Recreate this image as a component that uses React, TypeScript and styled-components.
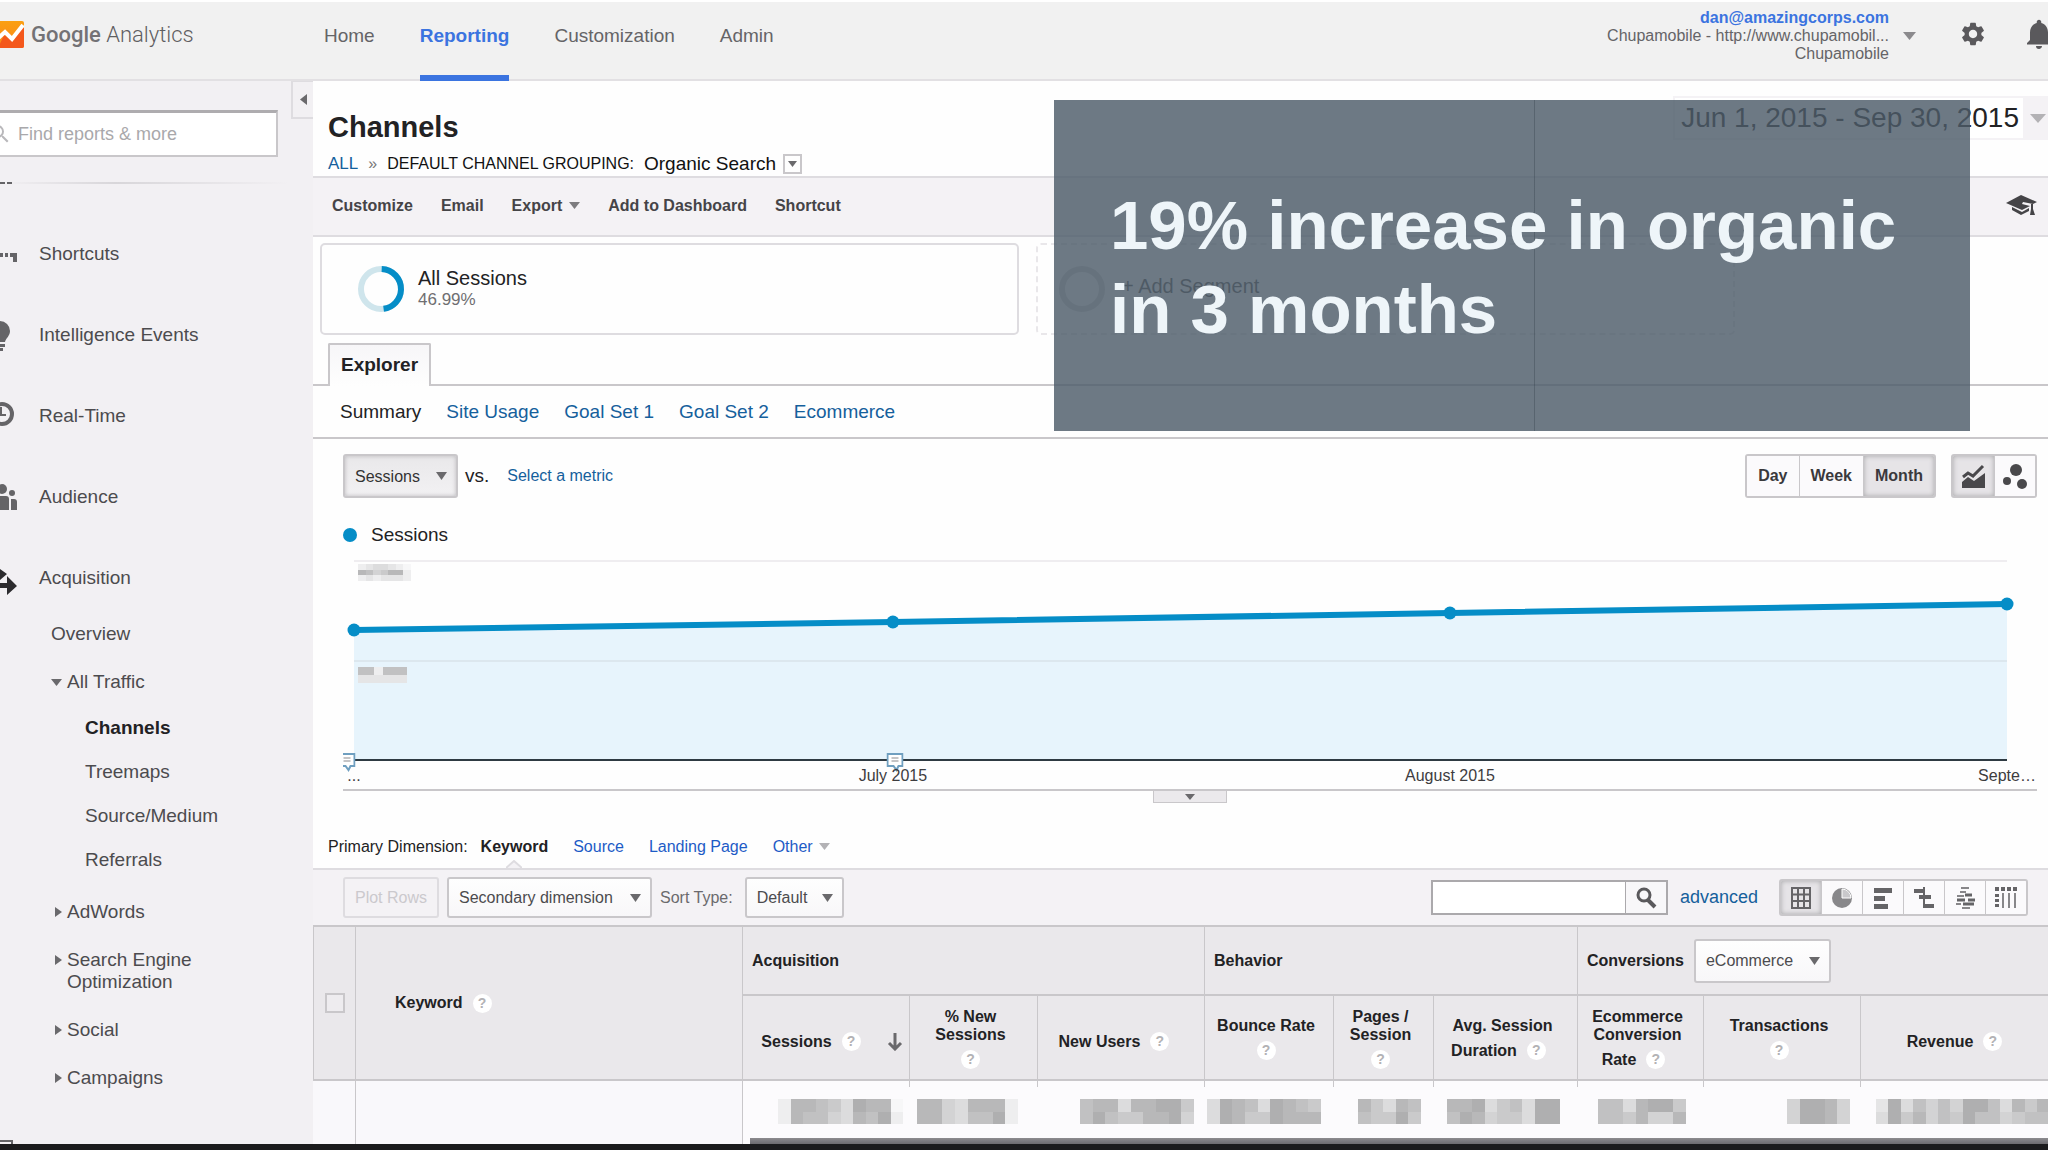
import React from "react";
import styled, { createGlobalStyle, css } from "styled-components";
import { MdNotifications, MdSearch, MdSettings } from "react-icons/md";

const color = {
  panel: "#f2f0f3",
  bar: "#f4f2f5",
  head: "#eae8eb",
  line: "#c9c7ca",
  softLine: "#dedce0",
  text: "#222224",
  muted: "#4c4b4e",
  link: "#15609c",
  blue: "#3b74e0",
  series: "#058dc7",
};

const GlobalStyle = createGlobalStyle`
  *, *::before, *::after { box-sizing: border-box; }
  body { margin: 0; background: #fff; }
  body, button, input, select { font-family: "Liberation Sans", Arial, sans-serif; font-size: 16px; color: ${color.text}; }
  button { padding: 0; border: 0; background: none; cursor: pointer; }
  a { text-decoration: none; color: ${color.link}; }
  ul { list-style: none; margin: 0; padding: 0; }
  h1, h2, p { margin: 0; }
  svg { display: block; flex: none; }
`;

/* ---------- shared ---------- */

const Page = styled.div`
  display: flex;
  flex-direction: column;
  min-height: 100vh;
  position: relative;
  overflow: hidden;
`;

const Columns = styled.div`
  display: flex;
  flex: 1;
`;

const Main = styled.main`
  flex: 1;
  min-width: 0;
  background: #fefefe;
`;

const PageEdge = styled.footer`
  height: 8px;
  background: #1b1b1d;
  border-bottom: 2px solid #fff;
`;

type CaretProps = { dir?: "down" | "left" | "right"; w?: number; h?: number; fill?: string };

function Caret({ dir = "down", w = 11, h = 8, fill = "#6a696c" }: CaretProps) {
  const points = {
    down: `0,0 ${w},0 ${w / 2},${h}`,
    left: `${w},0 ${w},${h} 0,${h / 2}`,
    right: `0,0 0,${h} ${w},${h / 2}`,
  }[dir];
  return (
    <svg width={w} height={h} aria-hidden="true">
      <polygon points={points} fill={fill} />
    </svg>
  );
}

const PickerBox = styled.span<{ $w: number; $h: number }>`
  display: inline-grid;
  align-items: center;
  width: ${(p) => p.$w}px;
  height: ${(p) => p.$h}px;
  > * { grid-area: 1 / 1; }
  > svg { justify-self: end; margin-right: 11px; pointer-events: none; }
`;

const PickerSelect = styled.select<{ $pressed?: boolean }>`
  appearance: none;
  width: 100%;
  height: 100%;
  padding: 0 24px 0 10px;
  border: 2px solid ${color.line};
  border-radius: 3px;
  color: ${color.muted};
  background: linear-gradient(#fefefe, #f8f7f9);
  ${(p) =>
    p.$pressed &&
    css`
      background: linear-gradient(#e9e8ea, #f2f1f3);
      box-shadow: inset 0 0 4px #bbb9bc;
      color: #333;
    `}
`;

function Picker(props: { label: string; value: string; w: number; h: number; pressed?: boolean }) {
  return (
    <PickerBox $w={props.w} $h={props.h}>
      <PickerSelect aria-label={props.label} $pressed={props.pressed}>
        <option>{props.value}</option>
      </PickerSelect>
      <Caret />
    </PickerBox>
  );
}

/* ---------- header ---------- */

const Header = styled.header`
  display: flex;
  height: 81px;
  border-top: 2px solid #fff;
  border-bottom: 2px solid #e2e0e3;
  background: #f1f1f1;
`;

const Brand = styled.a`
  display: flex;
  align-items: center;
  gap: 7px;
  width: 328px;
  height: 64px;
  margin-left: -4px;
  font-family: Roboto, sans-serif;
  font-size: 22px;
  font-weight: 300;
  color: #5f5e61;
  b { font-weight: 500; color: #737275; }
`;

const TopNav = styled.nav`
  display: flex;
  gap: 45px;
`;

const TopLink = styled.a<{ $active?: boolean }>`
  display: flex;
  height: 79px;
  margin-bottom: -2px;
  padding-top: 22px;
  line-height: 24px;
  font-size: 19px;
  color: #656467;
  border-bottom: 6px solid transparent;
  ${(p) => p.$active && css`color: ${color.blue}; font-weight: bold; border-color: ${color.blue};`}
`;

const HeaderTools = styled.div`
  display: flex;
  align-items: center;
  height: 64px;
  margin: 0 -9px 0 auto;
`;

const Account = styled.button`
  display: flex;
  align-items: center;
  gap: 14px;
  margin: 4px 43px 0 0;
  text-align: right;
  line-height: 18px;
  color: #656467;
  span { display: block; }
  b { color: ${color.blue}; }
`;

const IconButton = styled.button`
  display: flex;
  color: #5a595c;
  & + & { margin-left: 34px; }
`;

function LogoMark() {
  return (
    <svg width="28" height="27" viewBox="0 0 28 27" aria-hidden="true">
      <defs>
        <linearGradient id="mark" x1="0" y1="0" x2="0" y2="1">
          <stop offset="0" stopColor="#fba012" />
          <stop offset="1" stopColor="#f9861a" />
        </linearGradient>
      </defs>
      <rect width="28" height="27" rx="2" fill="url(#mark)" />
      <path d="M28 7 L28 25 Q28 27 26 27 L2 27 L8 14 L17 20 L26 7Z" fill="#f4581c" />
      <path d="M-1 20 L9 11 L16 18 L27 4" fill="none" stroke="#fff" strokeWidth="4" />
    </svg>
  );
}

function TopBar() {
  return (
    <Header>
      <Brand href="#home" aria-label="Google Analytics">
        <LogoMark />
        <span><b>Google</b> Analytics</span>
      </Brand>
      <TopNav>
        <TopLink href="#home">Home</TopLink>
        <TopLink href="#reporting" $active>Reporting</TopLink>
        <TopLink href="#customization">Customization</TopLink>
        <TopLink href="#admin">Admin</TopLink>
      </TopNav>
      <HeaderTools>
        <Account>
          <span>
            <b>dan@amazingcorps.com</b>
            <span>Chupamobile - http://www.chupamobil...</span>
            <span>Chupamobile</span>
          </span>
          <Caret w={13} h={8} fill="#8b8a8d" />
        </Account>
        <IconButton aria-label="Settings"><MdSettings size={28} /></IconButton>
        <IconButton aria-label="Notifications"><MdNotifications size={36} /></IconButton>
      </HeaderTools>
    </Header>
  );
}

/* ---------- sidebar ---------- */

const Sidebar = styled.aside`
  display: flex;
  flex-direction: column;
  width: 313px;
  flex: none;
  background: ${color.panel};
`;

const SidebarTop = styled.div`
  display: flex;
  justify-content: space-between;
  align-items: flex-start;
`;

const ReportSearch = styled.label`
  display: flex;
  align-items: center;
  gap: 6px;
  width: 278px;
  height: 47px;
  margin-top: 29px;
  border: 2px solid ${color.line};
  border-top: 3px solid #aeacaf;
  border-left: 0;
  background: #fff;
  color: #b9b8bb;
  overflow: hidden;
  svg { margin-left: -12px; }
  input {
    flex: 1;
    min-width: 0;
    padding: 0;
    border: 0;
    outline: 0;
    font-size: 18px;
    background: none;
  }
  input::placeholder { color: #a9a8ab; opacity: 1; }
`;

const CollapseTab = styled.button`
  display: flex;
  align-items: center;
  justify-content: center;
  width: 22px;
  height: 38px;
  border: 2px solid ${color.softLine};
  border-top-width: 1px;
  border-right: 0;
`;

const Divider = styled.div`
  display: flex;
  height: 12px;
  margin: 25px 24px 0 0;
  background: linear-gradient(90deg, transparent, rgba(190, 188, 192, 0.5) 40%, transparent) top / 100% 2px no-repeat;
`;

const Sections = styled.ul`
  display: flex;
  flex-direction: column;
  gap: 47px;
  padding-top: 43px;
`;

const SectionLink = styled.a`
  display: flex;
  align-items: center;
  gap: 22px;
  height: 34px;
  margin-left: -17px;
  font-size: 19px;
  color: ${color.muted};
`;

const SubList = styled.ul`
  padding-top: 15px;
`;

const SubLink = styled.a<{ $closed?: boolean }>`
  display: flex;
  gap: 5px;
  padding: 13px 88px 13px ${(p) => (p.$closed ? 55 : 51)}px;
  line-height: 22px;
  font-size: 19px;
  color: ${color.muted};
  svg { margin-top: ${(p) => (p.$closed ? 6 : 8)}px; }
`;

const LeafList = styled.ul`
  padding-bottom: 6px;
`;

const LeafLink = styled.a<{ $active?: boolean }>`
  display: block;
  padding-left: 85px;
  line-height: 44px;
  font-size: 19px;
  color: ${(p) => (p.$active ? color.text : color.muted)};
  font-weight: ${(p) => (p.$active ? "bold" : "normal")};
`;

const NextSection = styled.div`
  margin-top: auto;
`;

const sectionIcons: Record<string, React.ReactNode> = {
  Shortcuts: (
    <g fill="#656467">
      <rect x="2" y="16" width="4" height="4" /><rect x="8" y="16" width="3" height="4" />
      <rect x="12" y="16" width="3" height="4" /><rect x="17" y="16" width="3" height="4" />
      <rect x="22" y="16" width="3" height="4" />
      <path d="M27 16h7v9h-4v-5h-3z" />
    </g>
  ),
  "Intelligence Events": (
    <g fill="#656467">
      <path d="M17 3a10 10 0 0 1 10 10c0 5-4 7-5 11H12c-1-4-5-6-5-11A10 10 0 0 1 17 3z" />
      <rect x="13" y="26" width="9" height="3" /><rect x="14" y="30" width="6" height="3" />
    </g>
  ),
  "Real-Time": (
    <g fill="none" stroke="#656467">
      <circle cx="19" cy="15" r="10" strokeWidth="4" />
      <path d="M18 8v8h5" strokeWidth="2" />
    </g>
  ),
  Audience: (
    <g fill="#656467">
      <circle cx="19" cy="9" r="5" /><circle cx="29" cy="13" r="3" />
      <path d="M12 30V19q0-3 3-3h8q3 0 3 3v11zM28 30V19h3q3 0 3 3v8z" />
    </g>
  ),
  Acquisition: (
    <g fill="#2c2b2e">
      <path d="M13 5l11 8-7 6H6zM4 22h20v-7l10 10-10 9v-7H4z" />
    </g>
  ),
};

const channels = ["Channels", "Treemaps", "Source/Medium", "Referrals"];

function SideNav() {
  return (
    <Sidebar>
      <SidebarTop>
        <ReportSearch>
          <MdSearch size={24} />
          <input type="search" placeholder="Find reports & more" aria-label="Find reports & more" />
        </ReportSearch>
        <CollapseTab aria-label="Collapse navigation"><Caret dir="left" w={7} h={11} /></CollapseTab>
      </SidebarTop>
      <Divider>
        <svg width="12" height="2" aria-hidden="true"><path d="M0 1h5M7 1h5" stroke="#656467" strokeWidth="2" /></svg>
      </Divider>
      <nav>
        <Sections>
          {Object.entries(sectionIcons).map(([name, icon]) => (
            <li key={name}>
              <SectionLink href="#section">
                <svg width="34" height="34" aria-hidden="true">{icon}</svg>
                {name}
              </SectionLink>
            </li>
          ))}
        </Sections>
        <SubList>
          <li><SubLink href="#overview">Overview</SubLink></li>
          <li>
            <SubLink href="#traffic"><Caret w={11} h={7} />All Traffic</SubLink>
            <LeafList>
              {channels.map((name, i) => (
                <li key={name}><LeafLink href="#report" $active={i === 0}>{name}</LeafLink></li>
              ))}
            </LeafList>
          </li>
          {["AdWords", "Search Engine Optimization", "Social", "Campaigns"].map((name) => (
            <li key={name}>
              <SubLink href="#group" $closed><Caret dir="right" w={7} h={10} /><span>{name}</span></SubLink>
            </li>
          ))}
        </SubList>
      </nav>
      <NextSection>
        <svg width="14" height="4" aria-hidden="true"><path d="M0 1h12v4" fill="none" stroke="#656467" strokeWidth="2" /></svg>
      </NextSection>
    </Sidebar>
  );
}

/* ---------- report heading ---------- */

const Heading = styled.div`
  display: flex;
  justify-content: space-between;
  align-items: flex-start;
  height: 95px;
  padding-left: 15px;
`;

const Title = styled.h1`
  margin-top: 29px;
  line-height: 34px;
  font-size: 29px;
`;

const Crumbs = styled.div`
  display: flex;
  align-items: center;
  gap: 10px;
  height: 24px;
  margin-top: 8px;
  color: #111;
  a { font-size: 17px; }
  i { font-style: normal; color: #777; }
  b { font-weight: normal; font-size: 19px; }
  button {
    display: grid;
    place-items: center;
    width: 19px;
    height: 20px;
    margin-left: -3px;
    border: 2px solid ${color.line};
  }
`;

const DateRange = styled.button`
  display: flex;
  align-items: stretch;
  height: 44px;
  margin: 15px -6px 0 0;
  border: 2px solid #f4f2f5;
  background: ${color.bar};
  font-size: 28px;
  line-height: 40px;
  span { background: #fff; padding: 0 4px 0 6px; }
  svg { margin: 16px 6px 0 7px; }
`;

const ActionBar = styled.div`
  display: flex;
  align-items: center;
  gap: 28px;
  height: 61px;
  padding: 0 11px 2px 19px;
  border: solid ${color.softLine};
  border-width: 2px 0;
  background: ${color.bar};
  button { display: flex; align-items: center; gap: 7px; font-weight: bold; color: #454447; }
  button:last-child { margin-left: auto; }
`;

const SegmentRow = styled.div`
  display: flex;
  gap: 17px;
  padding: 6px 8px 8px 7px;
`;

const Segment = styled.button<{ $dashed?: boolean }>`
  display: flex;
  flex: 0 1 699px;
  align-items: center;
  gap: ${(p) => (p.$dashed ? 16 : 13)}px;
  height: 92px;
  padding-left: ${(p) => (p.$dashed ? 20 : 35)}px;
  border: 2px ${(p) => (p.$dashed ? "dashed #e9e7ea" : `solid ${color.softLine}`)};
  border-radius: 5px;
  text-align: left;
  font-size: 20px;
  line-height: 24px;
  color: ${(p) => (p.$dashed ? "#555" : color.text)};
  > span { padding-bottom: ${(p) => (p.$dashed ? 6 : 2)}px; }
  small { display: block; font-size: 17px; line-height: 20px; color: #6f6e71; }
`;

const TabRow = styled.div`
  display: flex;
  height: 43px;
  padding-left: 15px;
  border-bottom: 2px solid ${color.line};
`;

const ExplorerTab = styled.button`
  height: 43px;
  padding: 0 11px 2px;
  border: 2px solid ${color.line};
  border-bottom: 0;
  border-radius: 2px 2px 0 0;
  background: linear-gradient(#f7f6f8, #fefefe);
  font-size: 19px;
  font-weight: bold;
`;

const ReportTabs = styled.nav`
  display: flex;
  gap: 25px;
  height: 53px;
  padding-left: 27px;
  line-height: 52px;
  font-size: 19px;
  border-bottom: 2px solid ${color.line};
  a[aria-current] { color: ${color.text}; }
`;

function Donut({ share }: { share?: number }) {
  const r = 20;
  const c = 2 * Math.PI * r;
  return (
    <svg width="48" height="48" viewBox="0 0 48 48" aria-hidden="true">
      <circle cx="24" cy="24" r={r} fill="none" stroke={share ? "#cfe5ec" : "#d8d8d8"} strokeWidth="6" />
      {share && (
        <circle
          cx="24" cy="24" r={r} fill="none" stroke={color.series} strokeWidth="6"
          strokeDasharray={`${c * share} ${c}`} transform="rotate(-88 24 24)"
        />
      )}
    </svg>
  );
}

function CapIcon() {
  return (
    <svg width="31" height="21" viewBox="0 0 31 21" fill="#454447" aria-hidden="true">
      <path d="M0 8L15 0l16 7-4 2-10-2-1 2 8 2-8 4z" />
      <path d="M6 12l10 5 7-4v3l-8 4-9-5zM25 9h2v5l2 6h-5l1-6z" />
    </svg>
  );
}

function ReportHead() {
  return (
    <>
      <Heading>
        <div>
          <Title>Channels</Title>
          <Crumbs>
            <a href="#all">ALL</a><i>»</i>
            <span>DEFAULT CHANNEL GROUPING:</span><b>Organic Search</b>
            <button aria-label="Change channel"><Caret w={9} h={6} /></button>
          </Crumbs>
        </div>
        <DateRange>
          <span>Jun 1, 2015 - Sep 30, 2015</span>
          <Caret w={16} h={9} fill="#b3b2b5" />
        </DateRange>
      </Heading>
      <ActionBar>
        <button>Customize</button>
        <button>Email</button>
        <button>Export <Caret fill="#7d7c7f" h={7} /></button>
        <button>Add to Dashboard</button>
        <button>Shortcut</button>
        <button aria-label="Education"><CapIcon /></button>
      </ActionBar>
      <SegmentRow>
        <Segment>
          <Donut share={0.47} />
          <span>All Sessions<small>46.99%</small></span>
        </Segment>
        <Segment $dashed><Donut /><span>+ Add Segment</span></Segment>
      </SegmentRow>
      <TabRow><ExplorerTab>Explorer</ExplorerTab></TabRow>
      <ReportTabs>
        <a href="#summary" aria-current="page">Summary</a>
        <a href="#usage">Site Usage</a>
        <a href="#goal1">Goal Set 1</a>
        <a href="#goal2">Goal Set 2</a>
        <a href="#ecommerce">Ecommerce</a>
      </ReportTabs>
    </>
  );
}

/* ---------- chart ---------- */

const ChartBlock = styled.section`
  padding: 15px 11px 0 30px;
`;

const ChartControls = styled.div`
  display: flex;
  align-items: center;
  gap: 7px;
  height: 44px;
  > span + span { font-size: 19px; }
  > a { margin-left: 11px; }
`;

const ButtonGroup = styled.div<{ $h: number; $push?: boolean }>`
  display: flex;
  height: ${(p) => p.$h}px;
  margin-left: ${(p) => (p.$push ? "auto" : "8px")};
  border: 2px solid ${color.line};
  border-radius: 3px;
  overflow: hidden;
`;

const GroupButton = styled.button<{ $pressed?: boolean; $pad?: number }>`
  display: flex;
  align-items: center;
  justify-content: center;
  padding: 0 ${(p) => p.$pad ?? 11}px;
  font-weight: bold;
  color: #3a393c;
  background: ${(p) => (p.$pressed ? "#e6e4e7" : "#fbfafc")};
  box-shadow: ${(p) => (p.$pressed ? "inset 0 0 5px #a9a8ab" : "none")};
  & + & { border-left: 1px solid ${color.line}; }
`;

const Legend = styled.div`
  display: flex;
  align-items: center;
  gap: 14px;
  margin-top: 25px;
  line-height: 24px;
  font-size: 19px;
`;

const Plot = styled.div`
  position: relative;
  height: 231px;
  margin-top: 13px;
  overflow: hidden;
  border-bottom: 2px solid ${color.line};
`;

const PlotArea = styled.div`
  position: relative;
  margin: 0 30px 0 11px;
  > svg { width: 100%; height: 202px; overflow: visible; }
`;

const Tick = styled.span`
  position: absolute;
  top: 206px;
  line-height: 20px;
  transform: translateX(-50%);
  white-space: nowrap;
  color: #3d3c3f;
`;

const Note = styled.span`
  position: absolute;
  top: 193px;
  transform: translateX(-50%);
`;

const Redacted = styled.span<{ $top: number }>`
  position: absolute;
  top: ${(p) => p.$top}px;
  left: 4px;
`;

const ChartHandle = styled.button`
  display: flex;
  align-items: center;
  justify-content: center;
  width: 74px;
  height: 12px;
  margin: 0 auto;
  border: 1px solid ${color.line};
  border-top: 0;
  background: #ebe9ec;
`;

const points = [
  { x: 0, y: 70, label: "..." },
  { x: 32.6, y: 62, label: "July 2015" },
  { x: 66.3, y: 53, label: "August 2015" },
  { x: 100, y: 44, label: "Septe…" },
];

const notes = [-0.4, 32.7];

function Mosaic({ rows, w, h }: { rows: string[]; w: number; h: number }) {
  const cols = rows[0].length;
  return (
    <svg width={w} height={h} viewBox={`0 0 ${cols} ${rows.length}`} preserveAspectRatio="none" shapeRendering="crispEdges" aria-hidden="true">
      {rows.flatMap((row, y) =>
        [...row].map((d, x) => {
          const g = 247 - Number(d) * 9;
          return <rect key={`${x}-${y}`} x={x} y={y} width="1" height="1" fill={`rgb(${g},${g},${g + 1})`} />;
        }),
      )}
    </svg>
  );
}

function NoteIcon() {
  return (
    <svg width="17" height="19" viewBox="0 0 17 19" aria-hidden="true">
      <path d="M1 1h15v12h-4l-2 4-3-4H1z" fill="#fff" stroke="#6f9fc0" strokeWidth="2" />
      <path d="M5 5h7M5 8h7" stroke="#8a898c" />
    </svg>
  );
}

function SessionsChart() {
  const line = points.map((p) => `${p.x * 10},${p.y}`).join(" ");
  return (
    <ChartBlock>
      <ChartControls>
        <Picker label="Metric" value="Sessions" w={115} h={44} pressed />
        <span>vs.</span>
        <a href="#metric">Select a metric</a>
        <ButtonGroup $h={44} $push>
          <GroupButton>Day</GroupButton>
          <GroupButton>Week</GroupButton>
          <GroupButton $pressed>Month</GroupButton>
        </ButtonGroup>
        <ButtonGroup $h={44}>
          <GroupButton $pressed $pad={9} aria-label="Line chart">
            <svg width="23" height="24" aria-hidden="true">
              <path d="M0 24V18l6-5 6 4 11-8v15z" fill="#49484b" />
              <path d="M1 13l5-4 5 3L21 2" fill="none" stroke="#49484b" strokeWidth="3" />
            </svg>
          </GroupButton>
          <GroupButton $pad={8} aria-label="Motion chart">
            <svg width="24" height="26" fill="#49484b" aria-hidden="true">
              <circle cx="13" cy="7" r="6" /><circle cx="4" cy="18" r="4" /><circle cx="19" cy="21" r="5" />
            </svg>
          </GroupButton>
        </ButtonGroup>
      </ChartControls>
      <Legend>
        <svg width="14" height="14" aria-hidden="true"><circle cx="7" cy="7" r="7" fill={color.series} /></svg>
        Sessions
      </Legend>
      <Plot>
        <PlotArea>
          <svg viewBox="0 0 1000 202" preserveAspectRatio="none" role="img" aria-label="Sessions by month">
            <polygon points={`0,200 ${line} 1000,200`} fill="#e7f4fc" />
            <path d="M0 1H1000" stroke="#efedf0" strokeWidth="2" vectorEffect="non-scaling-stroke" />
            <path d="M0 101H1000" stroke="#dce7ee" strokeWidth="2" vectorEffect="non-scaling-stroke" />
            <polyline points={line} fill="none" stroke={color.series} strokeWidth="6" vectorEffect="non-scaling-stroke" />
            {points.map((p) => (
              <path
                key={p.x} d={`M${p.x * 10} ${p.y}h0.01`} stroke={color.series} strokeWidth="13"
                strokeLinecap="round" vectorEffect="non-scaling-stroke"
              />
            ))}
            <path d="M0 200H1000" stroke="#2e3a42" strokeWidth="2" vectorEffect="non-scaling-stroke" />
          </svg>
          <Redacted $top={4}><Mosaic rows={["1233210", "7645771", "1212221"]} w={53} h={17} /></Redacted>
          <Redacted $top={107}><Mosaic rows={["661666", "222222"]} w={49} h={16} /></Redacted>
          {notes.map((x) => (
            <Note key={x} style={{ left: `${x}%` }}><NoteIcon /></Note>
          ))}
          {points.map((p) => (
            <Tick key={p.label} style={{ left: `${p.x}%` }}>{p.label}</Tick>
          ))}
        </PlotArea>
      </Plot>
      <ChartHandle aria-label="Expand chart"><Caret w={10} h={6} /></ChartHandle>
    </ChartBlock>
  );
}

/* ---------- table ---------- */

const Dimensions = styled.div`
  display: flex;
  gap: 25px;
  height: 67px;
  padding: 22px 0 0 15px;
  line-height: 44px;
  border-bottom: 2px solid ${color.softLine};
  span { margin-right: -12px; }
  a { color: #1d5bc6; }
  a:last-child { display: flex; align-items: center; gap: 6px; }
`;

const Current = styled.b`
  position: relative;
  svg { position: absolute; bottom: -1px; left: 50%; margin-left: -8px; }
`;

const TableBar = styled.div`
  display: flex;
  align-items: center;
  gap: 8px;
  height: 55px;
  padding: 0 20px 0 30px;
  background: ${color.bar};
  label { display: flex; align-items: center; gap: 12px; color: #6b6a6d; }
  > a { margin: 0 5px 0 4px; font-size: 18px; }
`;

const PlotRows = styled.button`
  width: 96px;
  height: 41px;
  border: 2px solid ${color.softLine};
  border-radius: 3px;
  color: #cbc9cd;
`;

const TableSearch = styled.form`
  display: flex;
  width: 237px;
  height: 35px;
  margin-left: auto;
  border: 2px solid #aba9ac;
  input { flex: 1; min-width: 0; border: 0; background: #fff; }
  button { width: 41px; border-left: 1px solid #aba9ac; display: grid; place-items: center; background: #f8f7f9; color: #4c4b4e; }
`;

/* The last column runs on past the right edge of the window. */
const Table = styled.table`
  width: calc(100% + 14px);
  table-layout: fixed;
  border-collapse: separate;
  border-spacing: 0;
  border-top: 2px solid ${color.line};
`;

const Th = styled.th<{ $group?: boolean }>`
  padding: ${(p) => (p.$group ? "0 0 0 9px" : "8px 6px 0 0")};
  text-align: ${(p) => (p.$group ? "left" : "center")};
  line-height: 18px;
  background: ${color.head};
  border: solid ${color.line};
  border-width: 0 0 2px 1px;
`;

const HeadRow = styled.tr<{ $h: number }>`
  height: ${(p) => p.$h}px;
`;

const KeywordTh = styled(Th)`
  padding: 0 0 0 39px;
  text-align: left;
`;

const CheckTh = styled(Th)`
  padding: 0;
  input {
    appearance: none;
    display: block;
    width: 20px;
    height: 20px;
    margin: 0 auto;
    border: 2px solid ${color.line};
    background: #eeecef;
  }
`;

const GroupLabel = styled.span`
  display: flex;
  align-items: center;
  gap: 10px;
`;

const LastLine = styled.span<{ $text: boolean }>`
  display: flex;
  align-items: center;
  justify-content: center;
  gap: 10px;
  height: 32px;
  padding-right: ${(p) => (p.$text ? 8 : 0)}px;
`;

const Help = styled.button`
  width: 19px;
  height: 19px;
  flex: none;
  border-radius: 50%;
  background: #fff;
  color: #b3b2b5;
  font-size: 14px;
  line-height: 19px;
  font-weight: bold;
`;

const Td = styled.td<{ $pad?: number; $tick?: boolean; $inset?: number }>`
  height: 63px;
  padding: 18px ${(p) => p.$pad ?? 0}px 0 0;
  vertical-align: top;
  background: #f9f8fb;
  border-left: 1px solid ${(p) => (p.$tick ? "transparent" : color.line)};
  &:first-child { border-left-color: transparent; }
  svg { margin-left: auto; }
  ${(p) =>
    p.$pad !== undefined &&
    css`
      background:
        linear-gradient(${color.line}, ${color.line}) left top / 1px ${p.$tick ? 6 : 0}px no-repeat,
        linear-gradient(#8c8b8f, #6c6b70) right bottom / calc(100% - ${p.$inset ?? 0}px) 6px no-repeat,
        #fcfbfd;
      background-origin: border-box;
    `}
`;

type Column = { lines: string[]; last: string; w: number; bw: number; pad: number; rows: string[]; sorted?: boolean };

const columns: Column[] = [
  { lines: [], last: "Sessions", w: 167, bw: 125, pad: 6, sorted: true, rows: ["1776538770", "1766437681"] },
  { lines: ["% New", "Sessions"], last: "", w: 128, bw: 101, pad: 19, rows: ["77437771", "77436681"] },
  { lines: [], last: "New Users", w: 167, bw: 114, pad: 10, rows: ["677377885", "686557784"] },
  { lines: ["Bounce Rate"], last: "", w: 129, bw: 114, pad: 12, rows: ["387638765", "387558777"] },
  { lines: ["Pages /", "Session"], last: "", w: 100, bw: 63, pad: 12, rows: ["75376", "65585"] },
  { lines: ["Avg. Session"], last: "Duration", w: 144, bw: 113, pad: 17, rows: ["778356388", "687455388"] },
  { lines: ["Ecommerce", "Conversion"], last: "Rate", w: 126, bw: 88, pad: 17, rows: ["6637885", "6657447"] },
  { lines: ["Transactions"], last: "", w: 157, bw: 63, pad: 10, rows: ["48874", "48874"] },
  { lines: [], last: "Revenue", w: 202, bw: 186, pad: 0, rows: ["283646488637576", "385746586645665"] },
];

const viewIcons: Record<string, React.ReactNode> = {
  Table: <path d="M2 2h18v20H2zM8 2v20M14 2v20M2 8.5h18M2 15h18" fill="none" stroke="#656467" strokeWidth="2" />,
  Percentage: (
    <g><circle cx="11" cy="12" r="10" fill="#88878a" /><path d="M11 12V3a9 9 0 0 1 9 9z" fill="#c9c8cb" stroke="#fff" /></g>
  ),
  Performance: <path d="M2 2h18v5H2zM2 10h11v5H2zM2 18h14v5H2z" fill="#656467" />,
  Comparison: <path d="M1 3h11v4H1zM10 1h2v21h-2zM12 9h6v4h-6zM6 9h4v4H6zM10 18h11v4H10z" fill="#656467" />,
  "Term cloud": (
    <g stroke="#88878a">
      <path d="M7 2h8M6 6h6M3 10h7M2 18h5M8 22h8" strokeWidth="2" />
      <path d="M11 9h7M3 14h8M14 14h7M9 18h11" stroke="#656467" strokeWidth="3" />
    </g>
  ),
  Pivot: (
    <g stroke="#656467"><path d="M0 3h22" strokeWidth="4" strokeDasharray="4 2" /><path d="M2 8v14" strokeWidth="4" strokeDasharray="3 2" /><path d="M8 7v15M14 7v15M20 7v15" stroke="#88878a" strokeWidth="2" /></g>
  ),
};

const HeaderCell = styled.span`
  display: flex;
  align-items: center;
  > span { flex: 1; }
`;

function DataTable() {
  const help = (name: string) => <Help aria-label={`About ${name}`}>?</Help>;
  return (
    <>
      <Dimensions>
        <span>Primary Dimension:</span>
        <Current>
          Keyword
          <svg width="16" height="9" aria-hidden="true"><path d="M0 8L8 1l8 7" fill={color.bar} stroke={color.softLine} strokeWidth="2" /></svg>
        </Current>
        <a href="#source">Source</a>
        <a href="#landing">Landing Page</a>
        <a href="#other">Other <Caret w={11} h={7} fill="#b3b2b5" /></a>
      </Dimensions>
      <TableBar>
        <PlotRows disabled>Plot Rows</PlotRows>
        <Picker label="Secondary dimension" value="Secondary dimension" w={205} h={41} />
        <label>Sort Type: <Picker label="Sort type" value="Default" w={99} h={41} /></label>
        <TableSearch>
          <input type="text" aria-label="Filter rows" />
          <button type="button" aria-label="Search">
            <svg width="22" height="22" fill="none" stroke="#5a595c" aria-hidden="true">
              <circle cx="9" cy="8" r="6" strokeWidth="3" /><path d="M13 13l7 7" strokeWidth="4" />
            </svg>
          </button>
        </TableSearch>
        <a href="#advanced">advanced</a>
        <ButtonGroup $h={37}>
          {Object.entries(viewIcons).map(([name, icon], i) => (
            <GroupButton key={name} aria-label={name} $pressed={i === 0} $pad={9}>
              <svg width="22" height="24" aria-hidden="true">{icon}</svg>
            </GroupButton>
          ))}
        </ButtonGroup>
      </TableBar>
      <Table>
        <colgroup>
          <col width={42} />
          <col />
          {columns.map((c, i) => <col key={i} width={c.w} />)}
        </colgroup>
        <thead>
          <HeadRow $h={69}>
            <CheckTh rowSpan={2}><input type="checkbox" aria-label="Select all rows" /></CheckTh>
            <KeywordTh rowSpan={2}><GroupLabel>Keyword {help("Keyword")}</GroupLabel></KeywordTh>
            <Th colSpan={3} $group>Acquisition</Th>
            <Th colSpan={3} $group>Behavior</Th>
            <Th colSpan={3} $group>
              <GroupLabel>Conversions <Picker label="Conversions" value="eCommerce" w={137} h={44} /></GroupLabel>
            </Th>
          </HeadRow>
          <HeadRow $h={85}>
            {columns.map((c, i) => (
              <Th key={i}>
                <HeaderCell>
                  <span>
                    {c.lines.map((l) => <div key={l}>{l}</div>)}
                    <LastLine $text={c.last !== ""}>{c.last}{help(c.last || c.lines.join(" "))}</LastLine>
                  </span>
                  {c.sorted && (
                    <svg width="16" height="18" fill="none" stroke="#6a696c" strokeWidth="3" aria-hidden="true">
                      <path d="M8 0v16M2 10l6 6 6-6" />
                    </svg>
                  )}
                </HeaderCell>
              </Th>
            ))}
          </HeadRow>
        </thead>
        <tbody>
          <tr>
            <Td />
            <Td />
            {columns.map((c, i) => (
              <Td key={i} $pad={c.pad} $tick={i > 0} $inset={i === 0 ? 8 : 0}>
                <Mosaic rows={c.rows} w={c.bw} h={25} />
              </Td>
            ))}
          </tr>
        </tbody>
      </Table>
    </>
  );
}

/* ---------- caption over the report ---------- */

const Caption = styled.aside`
  position: absolute;
  top: 100px;
  right: 78px;
  width: 916px;
  height: 331px;
  padding: 84px 40px 0 56px;
  background:
    linear-gradient(rgba(40, 52, 62, 0.3), rgba(40, 52, 62, 0.3)) 480px 0 / 1px 100% no-repeat,
    rgba(77, 92, 105, 0.82);
  color: #eef5f9;
  font-size: 69px;
  line-height: 84px;
  font-weight: bold;
`;

export default function App() {
  return (
    <Page>
      <GlobalStyle />
      <TopBar />
      <Columns>
        <SideNav />
        <Main>
          <ReportHead />
          <SessionsChart />
          <DataTable />
        </Main>
      </Columns>
      <PageEdge />
      <Caption>19% increase in organic<br />in 3 months</Caption>
    </Page>
  );
}
